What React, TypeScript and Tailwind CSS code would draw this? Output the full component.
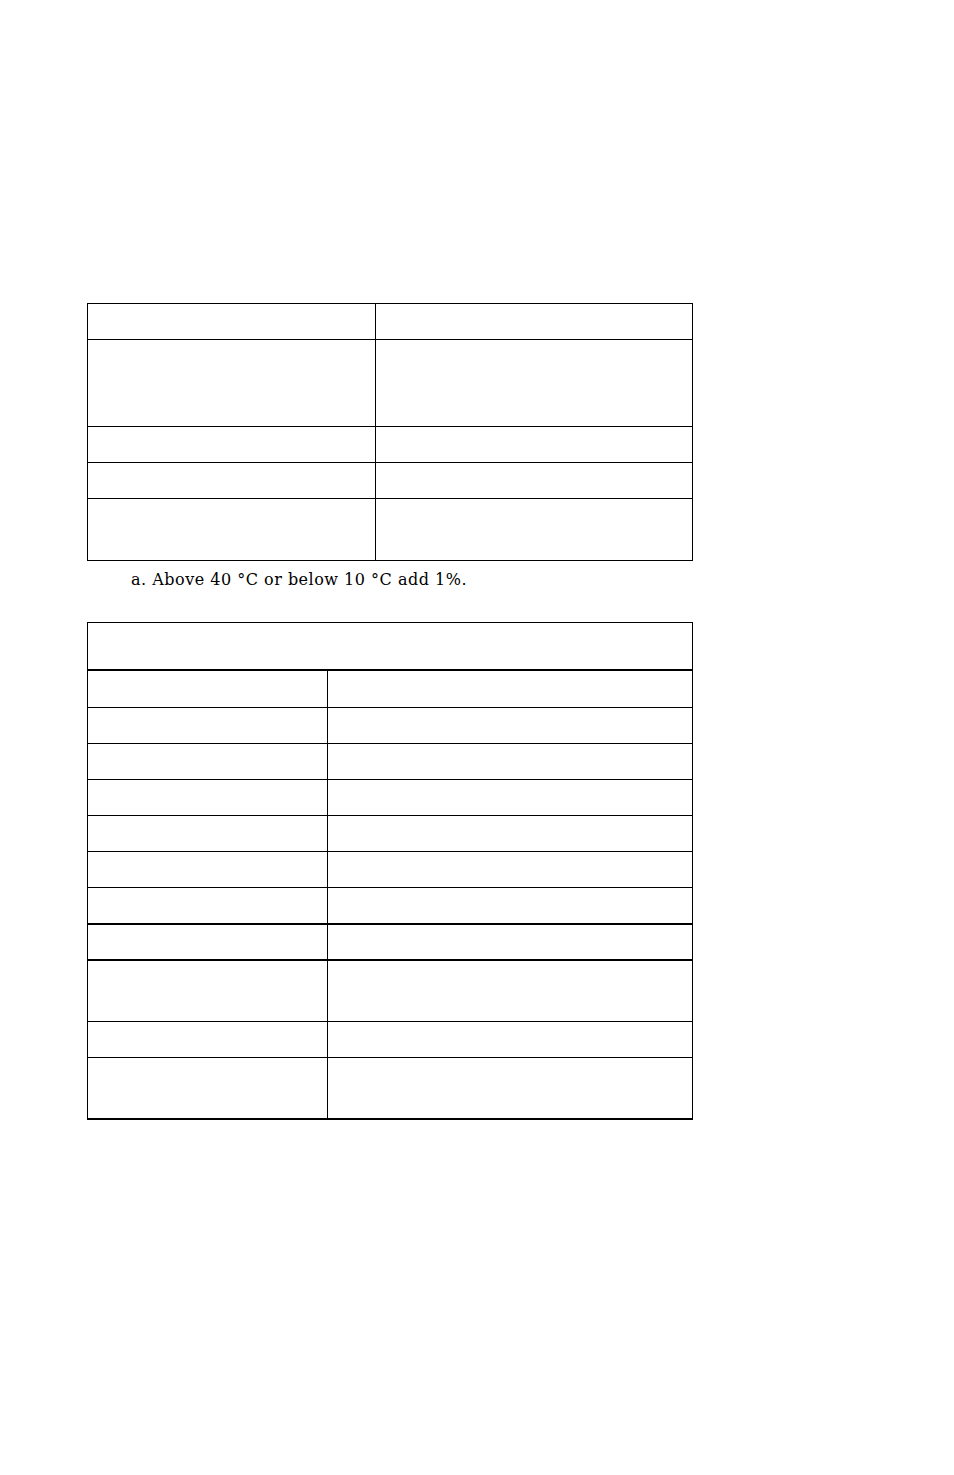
import React from 'react';

type Row = { h: string; thick?: boolean };

// row heights include the bottom rule
const firstTable: Row[] = [
  { h: 'h-[36px]' },
  { h: 'h-[87px]' },
  { h: 'h-[36px]' },
  { h: 'h-[36px]' },
  { h: 'h-[62px]' },
];

const secondTable: Row[] = [
  { h: 'h-[37px]' },
  { h: 'h-[36px]' },
  { h: 'h-[36px]' },
  { h: 'h-[36px]' },
  { h: 'h-[36px]' },
  { h: 'h-[36px]' },
  { h: 'h-[37px]', thick: true },
  { h: 'h-[36px]', thick: true },
  { h: 'h-[61px]' },
  { h: 'h-[36px]' },
  { h: 'h-[62px]', thick: true },
];

const GridRows: React.FC<{ rows: Row[]; leftWidth: string }> = ({ rows, leftWidth }) => (
  <>
    {rows.map((r, i) => (
      <div key={i} className={`flex ${r.h} ${r.thick ? 'border-b-2' : 'border-b'} border-black`}>
        <div className={`${leftWidth} shrink-0 border-r border-black`}></div>
        <div className="flex-1"></div>
      </div>
    ))}
  </>
);

export default function App() {
  return (
    <div className="min-h-[1475px] w-[954px] bg-white pl-[87px] pt-[303px]" style={{ fontFamily: '"DejaVu Serif", "Liberation Serif", serif' }}>
      <div className="w-[606px]">
        <div className="border-t border-l border-r border-black">
          <GridRows rows={firstTable} leftWidth="w-[288px]" />
        </div>

        <p className="ml-[44px] mt-[9px] h-[52px] text-[16px] leading-[20px] tracking-[0.5px] text-black">
          a. Above 40 °C or below 10 °C add 1%.
        </p>

        <div className="border-t border-l border-r border-black">
          <div className="h-[48px] border-b-2 border-black"></div>
          <GridRows rows={secondTable} leftWidth="w-[240px]" />
        </div>
      </div>
    </div>
  );
}
